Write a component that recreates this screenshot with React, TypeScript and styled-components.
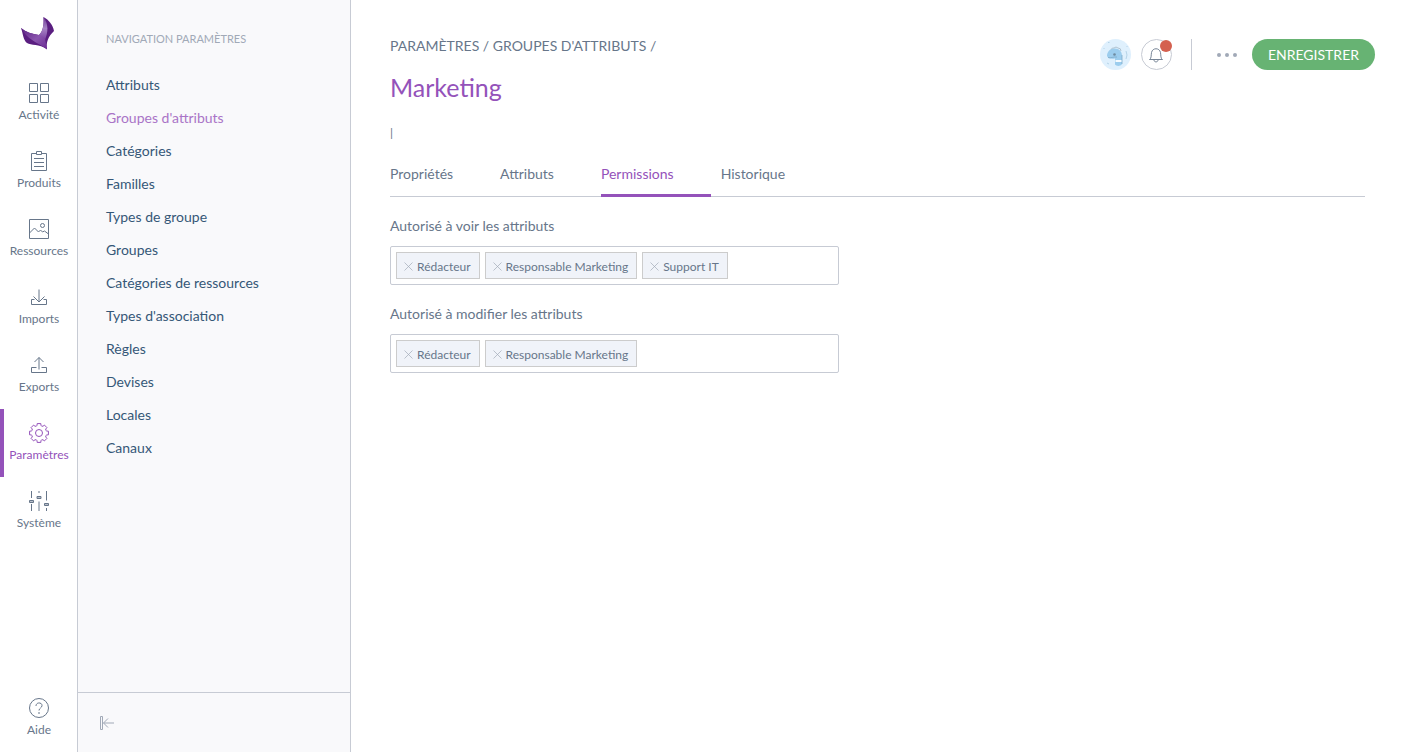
import React from 'react';
import styled, { createGlobalStyle } from 'styled-components';

const c = {
  brand: '#9452ba',
  brandLight: '#a974c7',
  grey: '#67768a',
  greyMid: '#a1a9b7',
  line: '#c7cbd4',
  dark: '#355777',
  green: '#67b373',
  panel: '#f9f9fb',
};

const GlobalStyle = createGlobalStyle`
  *, *::before, *::after { box-sizing: border-box; }
  body { margin: 0; background: #fff; color: ${c.grey}; font: 14px/18px Lato, sans-serif; }
  a { color: inherit; text-decoration: none; }
  ul { list-style: none; margin: 0; padding: 0; }
  button, input { font: inherit; color: inherit; }
  button { cursor: pointer; }
`;

const Page = styled.div`
  display: flex;
  min-height: 100vh;
`;

const MainNav = styled.nav`
  flex: none;
  width: 78px;
  border-right: 1px solid ${c.line};
  display: flex;
  flex-direction: column;
`;

const LogoLink = styled.a`
  height: 69px;
  padding: 15px 0 0 20px;
  svg { display: block; }
`;

const MenuLink = styled.a<{ $active?: boolean; $last?: boolean }>`
  display: flex;
  flex-direction: column;
  align-items: center;
  gap: 4px;
  height: 68px;
  padding: 14px 3px 0 0;
  border-left: 4px solid ${p => (p.$active ? c.brand : 'transparent')};
  color: ${p => (p.$active ? c.brand : c.grey)};
  font-size: 12px;
  line-height: 16px;
  svg { display: block; flex: none; }
  ${p => p.$last && 'margin-top: auto;'}
`;

const SidePanel = styled.aside`
  flex: none;
  width: 273px;
  background: ${c.panel};
  border-right: 1px solid ${c.line};
  display: flex;
  flex-direction: column;
`;

const SideNav = styled.nav`
  flex: 1;
  padding: 32px 28px;
`;

const SideTitle = styled.h2`
  margin: 0 0 30px;
  font-size: 11px;
  line-height: 14px;
  font-weight: 400;
  color: ${c.greyMid};
  text-transform: uppercase;
`;

const SideList = styled.ul`
  display: grid;
  gap: 15px;
`;

const SideLink = styled.a<{ $active?: boolean }>`
  display: block;
  color: ${p => (p.$active ? c.brandLight : c.dark)};
`;

const CollapseButton = styled.button`
  height: 60px;
  padding: 0 22px;
  border: 0;
  border-top: 1px solid ${c.line};
  background: none;
  display: flex;
  align-items: center;
  color: ${c.greyMid};
`;

const Main = styled.main`
  flex: 1;
  min-width: 0;
  padding: 37px 39px 40px;
`;

const Header = styled.header`
  display: flex;
  justify-content: space-between;
  align-items: flex-start;
  margin-right: -10px;
`;

const Breadcrumb = styled.nav`
  text-transform: uppercase;
`;

const Title = styled.h1`
  margin: 16px 0 0;
  font-size: 25px;
  line-height: 32px;
  font-weight: 400;
  color: ${c.brand};
`;

const Meta = styled.div`
  margin-top: 22px;
  font-size: 12px;
  line-height: 16px;
`;

const Actions = styled.div`
  display: flex;
  align-items: center;
  padding-top: 2px;
`;

const Avatar = styled.button`
  padding: 0;
  border: 0;
  background: none;
  svg { display: block; }
`;

const BellButton = styled.button`
  position: relative;
  width: 31px;
  height: 31px;
  margin-left: 10px;
  padding: 0;
  border: 1px solid ${c.line};
  border-radius: 50%;
  background: #fff;
  display: grid;
  place-items: center;
`;

const Dot = styled.span`
  position: absolute;
  top: 0;
  right: -1px;
  width: 12px;
  height: 12px;
  border-radius: 50%;
  background: #d4604f;
`;

const Divider = styled.span`
  width: 1px;
  height: 31px;
  margin: 0 25px 0 19px;
  background: ${c.line};
`;

const MoreButton = styled.button`
  padding: 0;
  border: 0;
  background: none;
  color: ${c.greyMid};
  svg { display: block; }
`;

const SaveButton = styled.button`
  height: 31px;
  margin-left: 15px;
  padding: 0 16px;
  border: 0;
  border-radius: 16px;
  background: ${c.green};
  color: #fff;
  text-transform: uppercase;
`;

const Tabs = styled.ul`
  display: flex;
  margin-top: 15px;
  border-bottom: 1px solid ${c.line};
`;

const Tab = styled.a<{ $active?: boolean }>`
  display: block;
  height: 41px;
  margin: 0 10px -1px 0;
  padding: 9px 37px 0 0;
  color: ${p => (p.$active ? c.brand : c.grey)};
  border-bottom: 3px solid ${p => (p.$active ? c.brand : 'transparent')};
`;

const Field = styled.section`
  margin-top: 20px;
`;

const FieldLabel = styled.label`
  display: block;
`;

const TagBox = styled.div`
  display: flex;
  flex-wrap: wrap;
  gap: 5px;
  max-width: 449px;
  min-height: 39px;
  margin-top: 11px;
  padding: 5px;
  border: 1px solid ${c.line};
  border-radius: 2px;
`;

const Tag = styled.span`
  display: flex;
  align-items: center;
  height: 27px;
  padding: 2px 8px 0 7px;
  gap: 4px;
  border: 1px solid #ccc;
  background: #f0f3f9;
  font-size: 12px;
  line-height: 16px;
`;

const RemoveButton = styled.button`
  padding: 0;
  border: 0;
  background: none;
  color: ${c.greyMid};
  svg { display: block; }
`;

const TagInput = styled.input`
  flex: 1;
  min-width: 20px;
  width: 20px;
  border: 0;
  padding: 0;
  outline: 0;
  background: none;
`;

const Icon = ({ children, size = 20, box = 20 }: { children: React.ReactNode; size?: number; box?: number }) => (
  <svg width={size} height={size} viewBox={`0 0 ${box} ${box}`} fill="none" stroke="currentColor" aria-hidden="true">
    {children}
  </svg>
);

// Outline of an eight-toothed wheel centred in a 20x20 box
const gear = (() => {
  const pts: string[] = [];
  for (let i = 0; i < 8; i++) {
    const at = (deg: number, r: number) => {
      const a = ((i * 45 + deg - 90) * Math.PI) / 180;
      return `${(10 + r * Math.cos(a)).toFixed(2)} ${(10 + r * Math.sin(a)).toFixed(2)}`;
    };
    pts.push(`${i ? 'L' : 'M'}${at(-11, 9.6)} L${at(11, 9.6)} L${at(14, 8)} Q${at(22.5, 6.6)} ${at(31, 8)}`);
  }
  return pts.join(' ') + 'Z';
})();

const icons = {
  activity: <path d="M.5.5h8v8h-8zM11.5.5h8v8h-8zM.5 11.5h8v8h-8zM11.5 11.5h8v8h-8z" />,
  products: <path d="M7.5 2.5h-5v17h15v-17h-5M7.5.5h5v3h-5zM5 7.5h10M5 11.5h10M5 15.5h10" />,
  assets: (
    <>
      <path d="M.5.5h19v19H.5zM.5 14l5-5 4 4 2-2 2 2 2-1 4 3" />
      <circle cx="13.5" cy="6.5" r="2" />
    </>
  ),
  imports: <path d="M10 2.5v12.500M4.500 9.500l5.500 5.500 5.500-5.500M5.500 12.500h-3v5h15v-5h-3" />,
  exports: <path d="M10 14.500V2.500M5.500 7L10 2.500 14.500 7M7.500 12.500h-5v5h15v-5h-5" />,
  settings: (
    <>
      <path d={gear} strokeLinejoin="round" />
      <circle cx="10" cy="10" r="3.5" />
    </>
  ),
  system: (
    <>
      <path d="M2.500 0v7M2.500 13v7M10 0v2M10 10.500v9.500M17.500 0v9.500M17.500 17v3" />
      <path d="M.500 9.500h4v2h-4zM8 5.500h4v2H8zM15.500 12.500h4v2h-4z" fill="#b9c0ca" />
    </>
  ),
  help: (
    <>
      <circle cx="10" cy="10" r="9.500" />
      <path d="M7 8c0-4 6-4 6-.500 0 2.500-3 2.500-3 5M10 14v2" />
    </>
  ),
};

const menu: { label: string; icon: keyof typeof icons }[] = [
  { label: 'Activité', icon: 'activity' },
  { label: 'Produits', icon: 'products' },
  { label: 'Ressources', icon: 'assets' },
  { label: 'Imports', icon: 'imports' },
  { label: 'Exports', icon: 'exports' },
  { label: 'Paramètres', icon: 'settings' },
  { label: 'Système', icon: 'system' },
];

const sections = [
  'Attributs', "Groupes d'attributs", 'Catégories', 'Familles', 'Types de groupe', 'Groupes',
  'Catégories de ressources', "Types d'association", 'Règles', 'Devises', 'Locales', 'Canaux',
];

const tabs = ['Propriétés', 'Attributs', 'Permissions', 'Historique'];

const PermissionField = ({ id, label, values }: { id: string; label: string; values: string[] }) => (
  <Field>
    <FieldLabel htmlFor={id}>{label}</FieldLabel>
    <TagBox>
      {values.map(v => (
        <Tag key={v}>
          <RemoveButton type="button" aria-label={`Retirer ${v}`}>
            <Icon size={9} box={9}><path d="M.5.5l8 8M8.5.5l-8 8" strokeWidth=".7" /></Icon>
          </RemoveButton>
          {v}
        </Tag>
      ))}
      <TagInput id={id} type="text" />
    </TagBox>
  </Field>
);

const Logo = () => (
  <svg width="36" height="36" viewBox="0 0 36 36" aria-hidden="true">
    <defs>
      <linearGradient id="leaf" x1="0" y1="0" x2="1" y2="1">
        <stop offset="0" stopColor="#5b2282" />
        <stop offset=".55" stopColor="#8a55ae" />
        <stop offset="1" stopColor="#6a2c93" />
      </linearGradient>
      <linearGradient id="fold" x1="0" y1="0" x2="0" y2="1">
        <stop offset="0" stopColor="#6f3a96" />
        <stop offset=".5" stopColor="#a684c4" />
        <stop offset="1" stopColor="#7a3fa3" />
      </linearGradient>
    </defs>
    <path d="M1 13C3 18 3 25 7 28C11 31 19 28 27 34.500C26 27 28 22 34 16C33 10 29 5 23.500 2C24 10 23 16 19 20C12 19 6 17 1 13Z" fill="#5a1e80" />
    <path d="M1 13C6 17 12 19 19 20C22 19 24 21 25 24L27 34C16 27 7 24 1 13Z" fill="url(#leaf)" />
    <path d="M23.500 2C24 10 23 16 19 20C22 20 24 22 25 25C28 17 29 10 23.500 2Z" fill="url(#fold)" />
  </svg>
);

export default function App() {
  return (
    <Page>
      <GlobalStyle />
      <MainNav aria-label="Menu principal">
        <LogoLink href="#" aria-label="Accueil"><Logo /></LogoLink>
        {menu.map(m => (
          <MenuLink key={m.icon} href="#" $active={m.icon === 'settings'}>
            <Icon>{icons[m.icon]}</Icon>
            {m.label}
          </MenuLink>
        ))}
        <MenuLink href="#" $last>
          <Icon>{icons.help}</Icon>
          Aide
        </MenuLink>
      </MainNav>

      <SidePanel>
        <SideNav aria-label="Navigation paramètres">
          <SideTitle>Navigation paramètres</SideTitle>
          <SideList>
            {sections.map((s, i) => (
              <li key={s}><SideLink href="#" $active={i === 1}>{s}</SideLink></li>
            ))}
          </SideList>
        </SideNav>
        <CollapseButton type="button" aria-label="Replier">
          <Icon size={14} box={14}><path d="M.5.5h2v13h-2zM14 7H3.500M8 2.500L3.500 7 8 11.500" /></Icon>
        </CollapseButton>
      </SidePanel>

      <Main>
        <Header>
          <div>
            <Breadcrumb aria-label="Fil d'Ariane">
              <a href="#">Paramètres</a> / <a href="#">Groupes d'attributs</a> /
            </Breadcrumb>
            <Title>Marketing</Title>
            <Meta>|</Meta>
          </div>
          <Actions>
            <Avatar type="button" aria-label="Profil">
              <svg width="31" height="31" viewBox="0 0 31 31">
                <circle cx="15.500" cy="15.500" r="15.500" fill="#dff0fd" />
                <path d="M7 17C7 12 11 9 15 9.500C20 10 22 13 22 17V25C20 28 16 27 15 25.500V19.500C12 20 8 20 7 17Z" fill="#9ccdee" />
                <path d="M11 10.500q1-2 3-1.500 2-2 4 0 3 0 3 3" fill="none" stroke="#a3b6c4" strokeWidth=".8" />
                <path d="M8 18.500c3 1 5-1 9-.500M22 16v9" fill="none" stroke="#7fa9c6" strokeWidth=".8" />
                <path d="M15.500 21h6v2h-6z" fill="#f6fbff" />
                <circle cx="14.500" cy="15.500" r="1.300" fill="#6e8ba0" />
                <path d="M8 3.500h1.500M26 12q2 4 0 8M4 9v1M7 24l2 1M27 7v1" fill="none" stroke="#a9cbe2" strokeWidth=".8" />
              </svg>
            </Avatar>
            <BellButton type="button" aria-label="Notifications">
              <Icon size={16} box={16}>
                <path d="M1.500 12.500h13C12.500 11.500 13 8.500 12.500 5.500 11.500.500 4.500.500 3.500 5.500 3 8.500 3.500 11.500 1.500 12.500zM6 13c0 2.500 4 2.500 4 0" strokeWidth=".9" />
              </Icon>
              <Dot />
            </BellButton>
            <Divider />
            <MoreButton type="button" aria-label="Autres actions">
              <svg width="20" height="4" viewBox="0 0 20 4" fill="currentColor">
                <circle cx="2" cy="2" r="2" /><circle cx="10" cy="2" r="2" /><circle cx="18" cy="2" r="2" />
              </svg>
            </MoreButton>
            <SaveButton type="button">Enregistrer</SaveButton>
          </Actions>
        </Header>

        <Tabs>
          {tabs.map(t => (
            <li key={t}><Tab href="#" $active={t === 'Permissions'}>{t}</Tab></li>
          ))}
        </Tabs>

        <PermissionField id="view" label="Autorisé à voir les attributs" values={['Rédacteur', 'Responsable Marketing', 'Support IT']} />
        <PermissionField id="edit" label="Autorisé à modifier les attributs" values={['Rédacteur', 'Responsable Marketing']} />
      </Main>
    </Page>
  );
}
